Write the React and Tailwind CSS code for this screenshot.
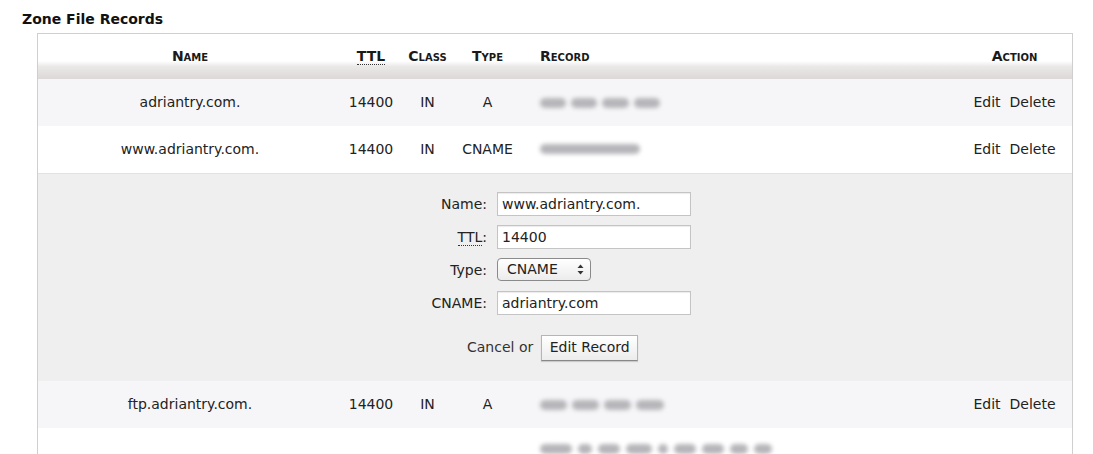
import React from 'react';

const Blur = ({ widths, gap = 5 }) => (
  <div className="flex items-center" style={{ gap }}>
    {widths.map((w, i) => (
      <div key={i} className="h-[10px] rounded-full bg-[#b6b6ba] blur-[2px]" style={{ width: w }} />
    ))}
  </div>
);

const Row = ({ name, type, record, shaded }) => (
  <tr className={shaded ? 'bg-[#f6f6f8]' : 'bg-white'}>
    <td className="h-[47px] text-center">{name}</td>
    <td className="text-center">14400</td>
    <td className="text-center">IN</td>
    <td className="text-center">{type}</td>
    <td className="pl-[20px]">{record}</td>
    <td className="text-center">
      <span className="mr-[9px]">Edit</span>
      <span>Delete</span>
    </td>
  </tr>
);

const Field = ({ label, children, abbr }) => (
  <>
    <div className="text-right pr-[10px] leading-[24px]">
      {abbr ? (
        <abbr className="no-underline border-b border-dotted border-[#333]">{label}</abbr>
      ) : (
        label
      )}
      {abbr && ':'}
    </div>
    <div>{children}</div>
  </>
);

const TextInput = ({ value }) => (
  <div className="w-[194px] h-[24px] border border-[#c4c4c4] bg-white px-[4px] leading-[22px] shadow-[inset_0_1px_1px_rgba(0,0,0,0.08)]">
    {value}
  </div>
);

export default function App() {
  return (
    <div className="w-[1093px] h-[454px] overflow-hidden bg-white text-[#222] font-['DejaVu_Sans',sans-serif] text-[14px]">
      <h2 className="pl-[22px] pt-[11px] text-[14px] font-bold leading-[16px] text-[#111]">Zone File Records</h2>
      <div className="ml-[37px] mt-[6px] w-[1036px] border border-[#cfcfcf] border-b-0">
        <table className="w-full border-collapse table-fixed">
          <colgroup>
            <col className="w-[304px]" />
            <col className="w-[58px]" />
            <col className="w-[55px]" />
            <col className="w-[65px]" />
            <col className="w-[437px]" />
            <col />
          </colgroup>
          <thead>
            <tr className="bg-[linear-gradient(to_bottom,#ffffff_0%,#ffffff_60%,#ebe8e8_72%,#dcd8d8_100%)] [font-variant:small-caps] font-bold text-[14px] text-[#1a1a1a]">
              <th className="h-[45px] pb-[1px] text-center">Name</th>
              <th className="pb-[1px] text-center">
                <abbr className="no-underline border-b border-dotted border-[#333]">TTL</abbr>
              </th>
              <th className="pb-[1px] text-center">Class</th>
              <th className="pb-[1px] text-center">Type</th>
              <th className="pb-[1px] pl-[20px] text-left">Record</th>
              <th className="pb-[1px] text-center">Action</th>
            </tr>
          </thead>
          <tbody>
            <Row name="adriantry.com." type="A" shaded record={<Blur widths={[26, 26, 27, 26]} />} />
            <Row name="www.adriantry.com." type="CNAME" record={<Blur widths={[100]} />} />
            <tr className="bg-[#efefef] border-t border-[#e2e2e2]">
              <td colSpan={6} className="h-[208px] align-top">
                <div className="ml-[359px] pt-[18px] grid grid-cols-[100px_194px] gap-y-[9px] items-center">
                  <Field label="Name:">
                    <TextInput value="www.adriantry.com." />
                  </Field>
                  <Field label="TTL" abbr>
                    <TextInput value="14400" />
                  </Field>
                  <Field label="Type:">
                    <div className="w-[94px] h-[23px] rounded-[4px] border border-[#8a8a8a] bg-[linear-gradient(to_bottom,#ffffff,#ececec)] flex items-center justify-between pl-[9px] pr-[6px]">
                      <span>CNAME</span>
                      <svg width="7" height="11" viewBox="0 0 7 11">
                        <path d="M3.5 0.5 L6.5 4 L0.5 4 Z" fill="#333" />
                        <path d="M3.5 10.5 L6.5 7 L0.5 7 Z" fill="#333" />
                      </svg>
                    </div>
                  </Field>
                  <Field label="CNAME:">
                    <TextInput value="adriantry.com" />
                  </Field>
                </div>
                <div className="ml-[429px] mt-[20px] flex items-center gap-[8px]">
                  <span className="text-[#333]">Cancel or</span>
                  <button className="w-[97px] h-[26px] border border-[#b5b5b5] border-b-[#888] bg-[linear-gradient(to_bottom,#ffffff,#ececec)] shadow-[0_1px_1px_rgba(0,0,0,0.15)] text-[14px] text-[#222]">
                    Edit Record
                  </button>
                </div>
              </td>
            </tr>
            <Row name="ftp.adriantry.com." type="A" shaded record={<Blur widths={[27, 27, 27, 28]} />} />
            <tr className="bg-white">
              <td colSpan={4} className="h-[47px]" />
              <td className="pl-[20px] pt-[16px] align-top">
                <Blur widths={[32, 14, 22, 26, 10, 22, 22, 18, 18]} gap={6} />
              </td>
              <td />
            </tr>
          </tbody>
        </table>
      </div>
    </div>
  );
}
